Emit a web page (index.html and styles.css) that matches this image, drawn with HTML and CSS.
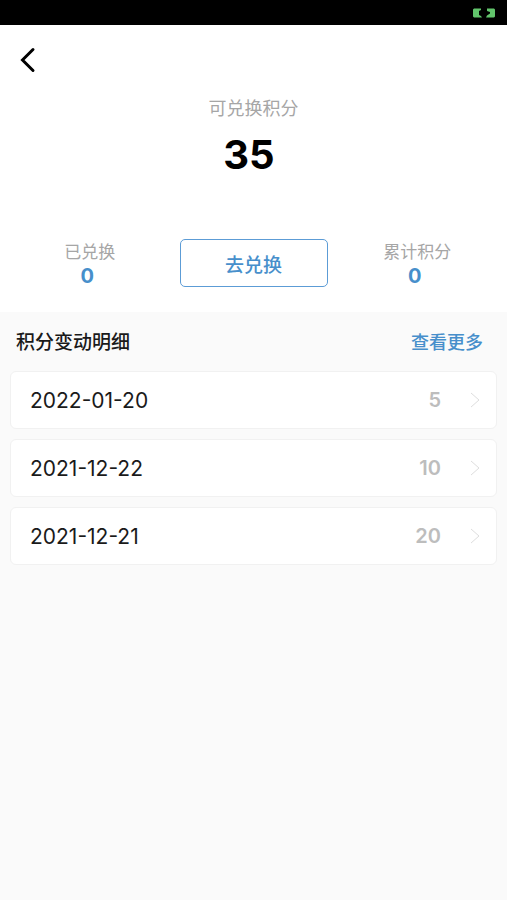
FILE: index.html
```html
<!DOCTYPE html>
<html lang="zh-CN">
<head>
<meta charset="utf-8">
<meta name="viewport" content="width=device-width, initial-scale=1">
<title>积分</title>
<link rel="stylesheet" href="styles.css">
</head>
<body>
<div class="status">
  <svg width="24" height="12" viewBox="0 0 24 12" fill="#62c56c" aria-hidden="true"><path d="M2 1.500h7L9 3 7 4v4l2 1 1 1.500H2L1 9.500v-7zM15 1.500h7l1 1v7l-1 1h-8l1-2 3-2V5l-3-1z"/></svg>
</div>
<header class="summary">
  <button class="back" type="button" aria-label="返回"><svg width="16" height="26" viewBox="0 0 16 26" fill="none" stroke="#000" stroke-width="3" stroke-linecap="round" aria-hidden="true"><path d="M13 2.500 2.500 13 13 23.500"/></svg></button>
  <div class="balance">
    <p class="balance-label">可兑换积分</p>
    <p class="balance-value">35</p>
  </div>
  <div class="stats">
    <div class="stat"><span>已兑换</span><strong>0</strong></div>
    <button class="redeem" type="button">去兑换</button>
    <div class="stat"><span>累计积分</span><strong>0</strong></div>
  </div>
</header>
<main>
  <div class="heading"><h1>积分变动明细</h1><a href="#more">查看更多</a></div>
  <ul class="records">
    <li><a href="#r1"><span class="date">2022-01-20</span><span class="points">5</span><svg width="10" height="16" viewBox="0 0 10 16" aria-hidden="true"><path d="m1 1 8 7-8 7"/></svg></a></li>
    <li><a href="#r2"><span class="date">2021-12-22</span><span class="points">10</span><svg width="10" height="16" viewBox="0 0 10 16" aria-hidden="true"><path d="m1 1 8 7-8 7"/></svg></a></li>
    <li><a href="#r3"><span class="date">2021-12-21</span><span class="points">20</span><svg width="10" height="16" viewBox="0 0 10 16" aria-hidden="true"><path d="m1 1 8 7-8 7"/></svg></a></li>
  </ul>
</main>
</body>
</html>
```

FILE: styles.css
```css
* { box-sizing: border-box; margin: 0; }
body { min-height: 100vh; background: #fafafa; color: #1a1a1a; font-family: Inter, "Noto Sans CJK SC", sans-serif; }
a { color: inherit; text-decoration: none; }
button { font: inherit; padding: 0; cursor: pointer; }
svg { display: block; }
.status { height: 25px; background: #000; display: flex; justify-content: flex-end; align-items: center; padding-right: 11px; }
.summary { background: #fff; padding: 22px 0 24px; }
.back { display: block; border: 0; background: none; margin-left: 20px; }
.balance { text-align: center; padding-top: 24px; }
.balance-label { font-size: 18px; line-height: 24px; color: #a6a6a6; }
.balance-value { font-size: 40px; line-height: 48px; font-weight: 700; color: #000; margin-top: 10px; padding-right: 9px; }
.stats { display: grid; grid-template-columns: 1fr 148px 1fr; align-items: center; margin-top: 59px; }
.stat { display: flex; flex-direction: column; align-items: center; padding-top: 2px; font-size: 17px; line-height: 24px; color: #a6a6a6; }
.stat strong { font-size: 20px; color: #478fcb; padding-right: 5px; }
.redeem { height: 48px; border: 1px solid #5c9cd6; border-radius: 5px; background: #fff; color: #478fcb; font-size: 19px; font-weight: 500; }
.heading { display: flex; justify-content: space-between; align-items: center; padding: 16px 24px 13px 16px; line-height: 30px; }
.heading h1 { font-size: 19px; font-weight: 500; }
.heading a { font-size: 18px; font-weight: 500; color: #478fcb; }
.records { list-style: none; padding: 0 10px; display: grid; gap: 10px; }
.records a { display: flex; align-items: center; height: 58px; padding: 0 16px 0 19px; background: #fff; border: 1px solid #f1f1f1; border-radius: 6px; font-size: 21px; }
.date { flex: 1; }
.points { font-size: 20px; font-weight: 600; color: #bdbdbd; margin-right: 29px; }
.records path { fill: none; stroke: #dedede; stroke-width: 1; }
```
